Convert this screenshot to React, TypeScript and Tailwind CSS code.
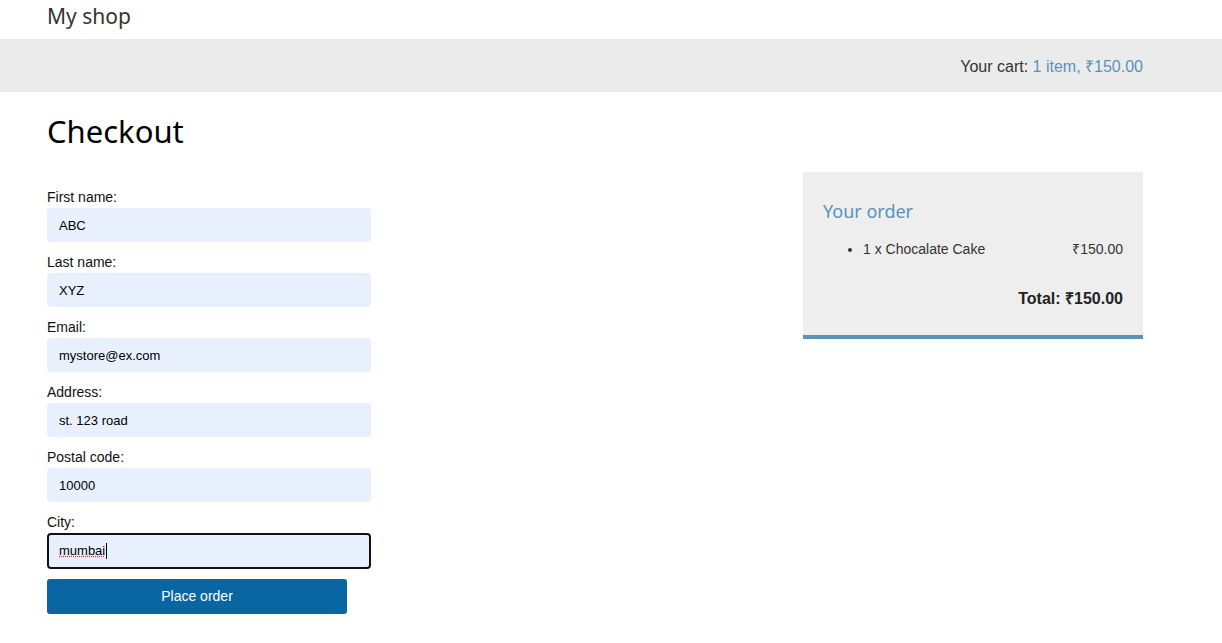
const fields = [
  { label: 'First name:', value: 'ABC' },
  { label: 'Last name:', value: 'XYZ' },
  { label: 'Email:', value: 'mystore@ex.com' },
  { label: 'Address:', value: 'st. 123 road' },
  { label: 'Postal code:', value: '10000' },
];

export default function App() {
  return (
    <div className="min-h-screen bg-white font-['Liberation_Sans',Arial,sans-serif] text-[#333]">
      <header className="h-[39px] px-[47px]">
        <div className="pt-[2px] font-['Noto_Sans',sans-serif] text-[21px] leading-[28px] text-[#333]">
          My shop
        </div>
      </header>

      <div className="flex h-[53px] items-center justify-end bg-[#ebebeb] pr-[79px] pt-[3px] text-[16px]">
        <span>
          Your cart: <a className="text-[#5993bb]">1 item, ₹150.00</a>
        </span>
      </div>

      <main className="pl-[47px] pr-[79px]">
        <h1 className="mt-[18px] font-['Noto_Sans',sans-serif] text-[31px] leading-[42px] text-black">
          Checkout
        </h1>

        <div className="mt-[20px] flex items-start justify-between">
          <form className="w-[324px] pt-[16px] text-[14px] text-[#111]">
            {fields.map((f) => (
              <div key={f.label} className="mb-[11px]">
                <label className="block leading-[18px]">{f.label}</label>
                <input
                  readOnly
                  defaultValue={f.value}
                  className="mt-[2px] block h-[34px] w-full rounded-[4px] bg-[#e8f0fe] px-[12px] text-[13px] text-black outline-none"
                />
              </div>
            ))}
            <div className="mb-[10px]">
              <label className="block leading-[18px]">City:</label>
              <div className="mt-[2px] flex h-[36px] w-full items-center rounded-[4px] border-2 border-[#111] bg-[#e8f0fe] px-[10px] text-[13px] text-black">
                <span className="underline decoration-red-500 decoration-dotted">mumbai</span>
                <span className="ml-[1px] h-[16px] w-[1px] bg-black" />
              </div>
            </div>
            <button
              type="button"
              className="h-[35px] w-[300px] rounded-[3px] bg-[#0a66a2] text-[14px] text-white"
            >
              Place order
            </button>
          </form>

          <aside className="w-[340px] border-b-4 border-[#5993bb] bg-[#eeeeee] px-[20px] pb-[26px] pt-[26px]">
            <h3 className="font-['Noto_Sans',sans-serif] text-[18px] leading-[26px] text-[#5993bb]">
              Your order
            </h3>
            <ul className="mt-[15px] list-disc pl-[40px] text-[14px] text-[#333]">
              <li className="leading-[20px]">
                <div className="flex justify-between">
                  <span>1 x Chocalate Cake</span>
                  <span>₹150.00</span>
                </div>
              </li>
            </ul>
            <p className="mt-[30px] text-right text-[16px] font-bold leading-[20px] text-[#222]">
              Total: ₹150.00
            </p>
          </aside>
        </div>
      </main>
    </div>
  );
}
